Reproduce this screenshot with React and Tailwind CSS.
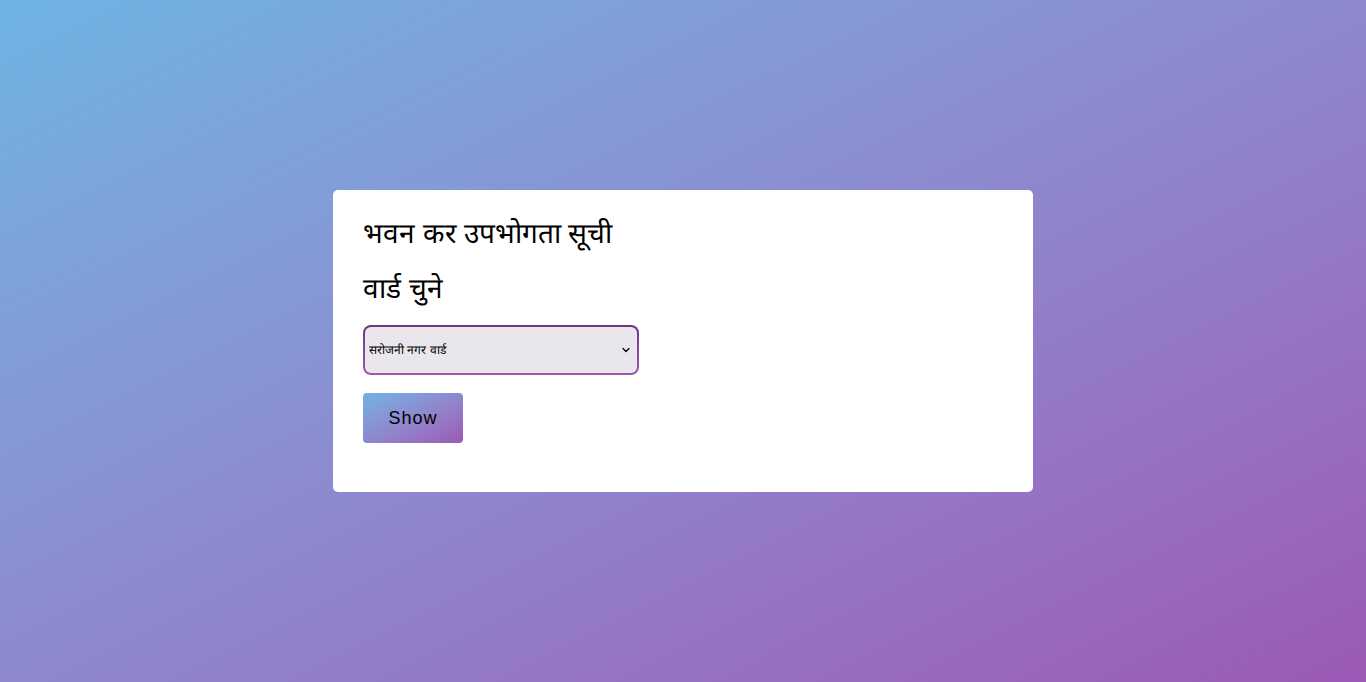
import { ChevronDown } from 'lucide-react'

const font = { fontFamily: '"Liberation Sans", Arial, sans-serif' }

const App = () => {
  return (
    <div
      style={font}
      className="min-h-screen w-full flex items-center justify-center bg-gradient-to-br from-[#6db4e4] to-[#9b59b6]"
    >
      <div className="w-[700px] bg-white rounded-[5px] px-[30px] pt-[24px] pb-[49px]">
        {/* Heading */}
        <h2 className="text-[28px] leading-[40px] text-black font-normal">भवन कर उपभोगता सूची</h2>
        <h3 className="text-[28px] leading-[40px] text-black font-normal mt-[15px]">वार्ड चुने</h3>

        {/* Ward picker */}
        <div className="mt-[16px] w-[276px] rounded-[8px] p-[2px] bg-gradient-to-b from-[#6c3483] to-[#9b59b6]">
          <div className="relative h-[46px] rounded-[6px] bg-[#e9e7ec] flex items-center pl-[4px]">
            <select
              style={font}
              className="appearance-none w-full h-full bg-transparent text-[12px] text-black outline-none"
              defaultValue="saroj"
            >
              <option value="saroj">सरोजनी नगर वार्ड</option>
            </select>
            <ChevronDown size={12} strokeWidth={2.5} className="absolute right-[5px] text-black pointer-events-none" />
          </div>
        </div>

        <button className="mt-[18px] w-[100px] h-[50px] rounded-[4px] bg-gradient-to-br from-[#6db4e4] to-[#9b59b6] text-[18px] tracking-[1px] text-black">
          Show
        </button>
      </div>
    </div>
  )
}

export default App
